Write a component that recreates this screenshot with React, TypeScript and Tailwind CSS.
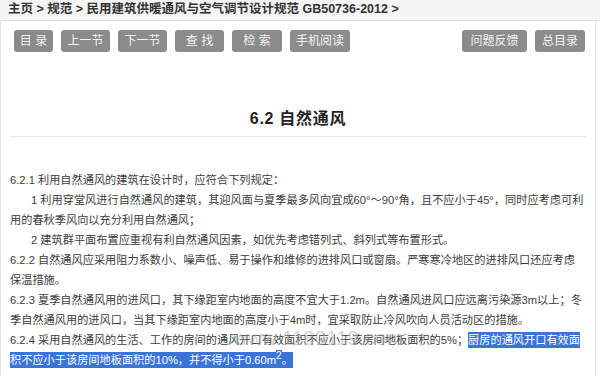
import React from "react";

const cjk = { fontFamily: '"Liberation Sans", "Noto Sans CJK SC", sans-serif' };

const leftButtons = [
  { label: "目 录", w: "w-[39px]" },
  { label: "上一节", w: "w-[49px]" },
  { label: "下一节", w: "w-[49px]" },
  { label: "查 找", w: "w-[49px]" },
  { label: "检 索", w: "w-[50px]" },
  { label: "手机阅读", w: "w-[60px]" },
];

const rightButtons = [
  { label: "问题反馈", w: "w-[65px]" },
  { label: "总目录", w: "w-[50px]" },
];

function NavButton({ label, w }: { label: string; w: string }) {
  return (
    <button
      className={`${w} h-[22px] rounded-[3px] bg-[#8b8b8b] text-[12px] leading-[22px] text-[#f4f4f4] text-center`}
    >
      {label}
    </button>
  );
}

export default function App() {
  return (
    <div className="w-[600px] h-[376px] overflow-hidden bg-white text-[#333]" style={cjk}>
      <div className="h-[21px] bg-[#f5f5f5] border-b border-[#dedede] pl-[8px] text-[12.5px] font-bold leading-[19px] text-[#333]">
        主页 &gt; 规范 &gt; 民用建筑供暖通风与空气调节设计规范 GB50736-2012 &gt;
      </div>

      <div className="w-[596px] h-[355px] border-r border-l border-[#e2e2e2] relative">
        <div className="flex justify-between pt-[9px] pl-[13px] pr-[10px]">
          <div className="flex gap-[8px]">
            {leftButtons.map((b) => (
              <NavButton key={b.label} {...b} />
            ))}
          </div>
          <div className="flex gap-[8px]">
            {rightButtons.map((b) => (
              <NavButton key={b.label} {...b} />
            ))}
          </div>
        </div>

        <div className="mt-[55px] mx-[9px] border-b border-[#e6e6e6] pb-[5px]">
          <h2 className="text-center text-[16px] leading-[24px] font-bold tracking-[0.7px] text-[#222]">
            6.2 自然通风
          </h2>
        </div>

        <div className="mt-[33px] pl-[9px] text-[11.2px] leading-[20px] text-[#3c3c3c] whitespace-nowrap">
          <p>6.2.1 利用自然通风的建筑在设计时，应符合下列规定：</p>
          <p className="indent-[21px]">
            1 利用穿堂风进行自然通风的建筑，其迎风面与夏季最多风向宜成60°～90°角，且不应小于45°，同时应考虑可利
            <br />
            用的春秋季风向以充分利用自然通风；
          </p>
          <p className="indent-[21px]">2 建筑群平面布置应重视有利自然通风因素，如优先考虑错列式、斜列式等布置形式。</p>
          <p>
            6.2.2 自然通风应采用阻力系数小、噪声低、易于操作和维修的进排风口或窗扇。严寒寒冷地区的进排风口还应考虑
            <br />
            保温措施。
          </p>
          <p>
            6.2.3 夏季自然通风用的进风口，其下缘距室内地面的高度不宜大于1.2m。自然通风进风口应远离污染源3m以上；冬
            <br />
            季自然通风用的进风口，当其下缘距室内地面的高度小于4m时，宜采取防止冷风吹向人员活动区的措施。
          </p>
          <p>
            6.2.4 采用自然通风的生活、工作的房间的通风开口有效面积不应小于该房间地板面积的5%；
            <span className="bg-[#3a74d6] text-white py-[2px]">
              厨房的通风开口有效面
              <br />
              积不应小于该房间地板面积的10%，并不得小于0.60m<sup className="text-[10px] bg-[#3a74d6]">2</sup>。
            </span>
          </p>
        </div>

        <div className="absolute left-[232px] top-[302px] text-[20px] tracking-[0.3px] text-[#a8a8a8] opacity-50 select-none pointer-events-none">
          www.1180119.com
        </div>
      </div>
    </div>
  );
}
